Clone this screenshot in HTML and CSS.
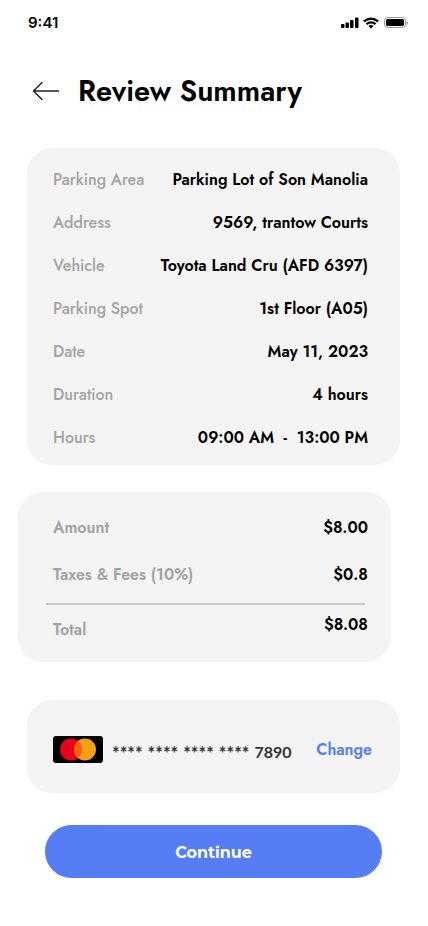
FILE: index.html
```html
<!DOCTYPE html>
<html lang="en">
<head>
<meta charset="utf-8">
<meta name="viewport" content="width=device-width, initial-scale=1">
<title>Review Summary</title>
<link rel="stylesheet" href="styles.css">
</head>
<body>
<div class="status">
  <span class="time">9:41</span>
  <svg class="indicators" width="68" height="14" viewBox="0 0 68 14" aria-hidden="true">
    <rect x="1" y="8" width="3.500" height="4" rx="1"/>
    <rect x="5.500" y="6.500" width="3.500" height="5.500" rx="1"/>
    <rect x="10" y="4" width="3.500" height="8" rx="1"/>
    <rect x="15" y="1.500" width="3.500" height="10.500" rx="1"/>
    <path d="M23 4.700Q31-1.700 39 4.700L37.400 6.300Q31 1.300 24.600 6.300ZM25.700 7.300Q31 3 36.300 7.300L34.700 8.900Q31 6 27.300 8.900ZM28.400 9.900Q31 7.900 33.600 9.900L31 12.500Z"/>
    <rect x="44.500" y="1.500" width="21" height="10" rx="3" fill="none" stroke="#000" stroke-opacity=".4"/>
    <rect x="46" y="3" width="18" height="7" rx="1.500"/>
    <path d="M66.500 5v4q1.500-.5 1.500-2t-1.500-2" opacity=".4"/>
  </svg>
</div>
<header class="header">
  <button class="back" type="button" aria-label="Back">
    <svg width="28" height="20" viewBox="0 0 28 20" fill="none" stroke="#222" stroke-width="1.500" stroke-linecap="round" stroke-linejoin="round"><path d="M26.500 10H1.500M10 1.500L1.500 10l8.500 8.500"/></svg>
  </button>
  <h1>Review Summary</h1>
</header>
<main>
  <dl class="card details">
    <div class="row"><dt>Parking Area</dt><dd>Parking Lot of Son Manolia</dd></div>
    <div class="row"><dt>Address</dt><dd>9569, trantow Courts</dd></div>
    <div class="row"><dt>Vehicle</dt><dd>Toyota Land Cru (AFD 6397)</dd></div>
    <div class="row"><dt>Parking Spot</dt><dd>1st Floor (A05)</dd></div>
    <div class="row"><dt>Date</dt><dd>May 11, 2023</dd></div>
    <div class="row"><dt>Duration</dt><dd>4 hours</dd></div>
    <div class="row"><dt>Hours</dt><dd>09:00 AM &nbsp;-&nbsp; 13:00 PM</dd></div>
  </dl>
  <dl class="card costs">
    <div class="row"><dt>Amount</dt><dd>$8.00</dd></div>
    <div class="row"><dt>Taxes &amp; Fees (10%)</dt><dd>$0.8</dd></div>
    <div class="row total"><dt>Total</dt><dd>$8.08</dd></div>
  </dl>
  <section class="card payment" aria-label="Payment method">
    <svg class="brand" width="50" height="27" viewBox="0 0 50 27" aria-hidden="true">
      <rect width="50" height="27" rx="3"/>
      <circle cx="18" cy="13.500" r="11" fill="#eb001b"/>
      <circle cx="32" cy="13.500" r="11" fill="#f79e1b"/>
      <path d="M25 5a11 11 0 0 1 0 17a11 11 0 0 1 0-17" fill="#ff5f00"/>
    </svg>
    <span class="number"><span class="mask">****</span><span class="mask">****</span><span class="mask">****</span><span class="mask">****</span><span>7890</span></span>
    <a class="change" href="#change">Change</a>
  </section>
  <button class="continue" type="button">Continue</button>
</main>
</body>
</html>
```

FILE: styles.css
```css
* { box-sizing: border-box; }
body {
  margin: 0;
  background: #fff;
  color: #000;
  font: 500 16px/23px Jost, Lato, sans-serif;
}
.status {
  display: flex;
  justify-content: space-between;
  align-items: center;
  height: 46px;
  padding: 0 20px 0 28px;
}
.time { font: 600 15px/20px Inter, sans-serif; }
.header {
  display: flex;
  align-items: center;
  gap: 18px;
  padding: 23px 32px 0;
}
.back { display: flex; padding: 0; border: 0; background: none; }
h1 { margin: 0; font-size: 29px; line-height: 44px; font-weight: 600; }
main { display: flex; flex-direction: column; padding: 35px 28px 48px 27px; }
.card { margin: 0; background: #f4f4f4; border-radius: 25px; }
.row { display: flex; justify-content: space-between; }
dt { color: #a3a3a3; }
dd { margin: 0; font-weight: 600; }
.details { display: grid; gap: 20px; padding: 20px 32px 16px 26px; }
.costs {
  display: grid;
  margin: 27px 9px 0 -9px;
  padding: 24px 23px 21px 35px;
}
.costs dt { font-weight: 600; }
.costs .row + .row { margin-top: 24px; }
.costs .total.row { flex-wrap: wrap; margin-top: 17px; }
.total::before {
  content: "";
  flex: 1 0 100%;
  height: 2px;
  margin: 0 3px 8px -7px;
  background: #cacaca;
}
.total dt { padding-top: 5px; }
.payment {
  display: flex;
  align-items: center;
  margin-top: 38px;
  padding: 36px 28px 30px 26px;
}
.number {
  display: flex;
  align-items: flex-end;
  gap: 5px;
  margin-left: 9px;
  padding-top: 4px;
  color: #333;
  font: 700 16px/23px Lato, sans-serif;
}
.mask { font-size: 18px; line-height: 19px; }
.change {
  margin-left: auto;
  color: #567df4;
  font-weight: 600;
  text-decoration: none;
}
.continue {
  margin: 32px 18px 0;
  height: 53px;
  padding: 2px 0 0;
  border: 0;
  border-radius: 27px;
  background: #567df4;
  color: #fff;
  font: 700 16px/24px Montserrat, Lato, sans-serif;
}
```
